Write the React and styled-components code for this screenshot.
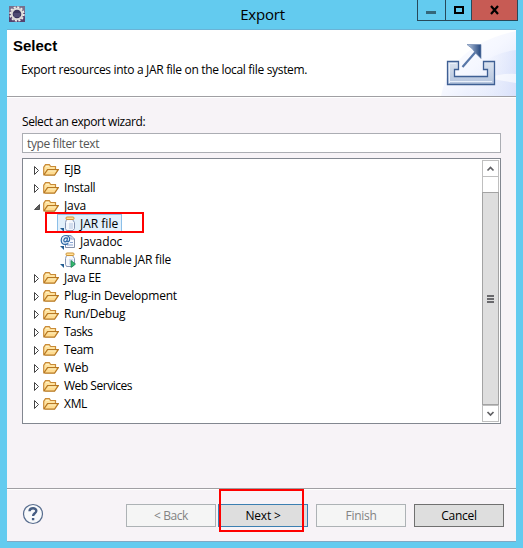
import React from 'react';
import styled, { createGlobalStyle, css } from 'styled-components';

const GlobalStyle = createGlobalStyle`
  * { box-sizing: border-box; }
  body { margin: 0; overflow: hidden; }
`;

const Window = styled.div`
  width: 523px;
  height: 548px;
  padding: 0 7px 6px;
  background: #63cbef;
  color: #000;
  font: 12px/18px 'Open Sans', 'Noto Sans', sans-serif;
  display: flex;
  flex-direction: column;
  cursor: default;
`;

const TitleBar = styled.header`
  position: relative;
  height: 29px;
  flex: none;
  display: flex;
  justify-content: space-between;
  padding-left: 2px;
`;

const AppIcon = styled.svg`
  width: 16px;
  height: 16px;
  margin-top: 6px;
`;

const WindowTitle = styled.h1`
  position: absolute;
  left: 0;
  right: 0;
  top: 4px;
  margin: 0;
  padding-left: 2px;
  text-align: center;
  font-size: 15px;
  line-height: 21px;
  font-weight: 400;
  letter-spacing: -0.2px;
`;

const Controls = styled.div`
  position: relative;
  display: flex;
  height: 21px;
  margin-right: -2px;
  border: solid #27495a;
  border-width: 0 1px 1px;
`;

const Control = styled.button`
  width: ${(p) => p.$width}px;
  padding: 0;
  border: 0;
  border-left: ${(p) => (p.$first ? 0 : '1px solid #27495a')};
  background: ${(p) => (p.$close ? '#c75b54' : 'transparent')};
  display: flex;
`;

const Client = styled.main`
  flex: 1;
  display: flex;
  flex-direction: column;
  background: #f7f3f7;
  border-top: 1px solid #6ab3d6;
  border-bottom: 1px solid #7fa9c4;
`;

const Banner = styled.section`
  height: 67px;
  flex: none;
  display: flex;
  justify-content: space-between;
  background: #fff;
  border-bottom: 1px solid #a09fa3;
  box-shadow: 0 1px #fff;
`;

const BannerText = styled.div`
  padding: 7px 0 0 6px;
`;

const Heading = styled.h2`
  margin: 0;
  font: bold 15px/18px 'Liberation Sans', sans-serif;
`;

const Description = styled.p`
  margin: 6px 0 0 8px;
  letter-spacing: -0.32px;
`;

const Body = styled.section`
  flex: 1;
  padding: 16px 15px 0;
`;

const Label = styled.label`
  display: block;
  height: 20px;
  letter-spacing: -0.42px;
`;

const Filter = styled.input`
  display: block;
  width: 479px;
  height: 20px;
  padding: 0 4px;
  border: 1px solid #abadb3;
  border-radius: 0;
  outline: 0;
  background: #fff;
  font: inherit;
  letter-spacing: -0.38px;
  &::placeholder { color: #555; opacity: 1; }
`;

const TreePanel = styled.div`
  display: flex;
  justify-content: space-between;
  width: 479px;
  height: 266px;
  margin-top: 5px;
  padding: 1px;
  border: 1px solid #828790;
  background: #fff;
`;

const Tree = styled.ul`
  margin: 0;
  padding: 1px 0 0;
  list-style: none;
`;

const Row = styled.li`
  position: relative;
  display: flex;
  align-items: center;
  height: 18px;
  padding-left: ${(p) => (p.$child ? 34 : 9)}px;
`;

const Arrow = styled.svg`
  width: 8px;
  height: 12px;
  margin-right: 2px;
`;

const RowIcon = styled.svg`
  width: 16px;
  height: 16px;
  flex: none;
`;

const Name = styled.span`
  height: 18px;
  line-height: 18px;
  margin-left: ${(p) => (p.$child ? 4 : 5)}px;
  white-space: nowrap;
  letter-spacing: ${(p) => p.$spacing}px;
`;

const Item = styled.div`
  display: flex;
  align-items: center;
  height: 18px;
  padding-left: ${(p) => (p.$child ? 2 : 0)}px;
  border: 1px solid transparent;
  margin-left: -1px;
  ${(p) => p.$selected && css`
    width: 65px;
    margin-top: -2px;
    padding-top: 1px;
    background: #e2f0fb;
    border-color: #8cbfe8;
  `}
`;

const Marker = styled.div`
  position: absolute;
  pointer-events: none;
  border: 2px solid #f00;
  left: ${(p) => p.$x}px;
  top: ${(p) => p.$y}px;
  width: ${(p) => p.$w}px;
  height: ${(p) => p.$h}px;
`;

const ScrollBar = styled.div`
  width: 17px;
  display: flex;
  flex-direction: column;
  border: 1px solid #bfbfbf;
`;

const ScrollButton = styled.svg`
  width: 15px;
  height: 16px;
  flex: none;
  border: solid #bfbfbf;
  border-width: ${(p) => (p.$down ? '1px 0 0' : '0 0 1px')};
`;

const Track = styled.div`
  flex: 1;
  padding-top: 15px;
  display: flex;
`;

const Thumb = styled.div`
  flex: 1;
  margin: 0 -1px;
  border: 1px solid #a3a3a3;
  background: #dedede;
  display: flex;
  flex-direction: column;
  align-items: center;
  justify-content: center;
  gap: 1px;
`;

const Grip = styled.i`
  width: 7px;
  height: 2px;
  background: #69696c;
`;

const Footer = styled.footer`
  height: 53px;
  flex: none;
  display: flex;
  align-items: center;
  padding: 1px 12px 0 15px;
  border-top: 1px solid #a09fa3;
  box-shadow: inset 0 1px #fff;
`;

const HelpIcon = styled.svg`
  width: 22px;
  height: 22px;
  margin: -3px auto 0 0;
`;

const ButtonSlot = styled.div`
  position: relative;
  margin-left: ${(p) => p.$gap}px;
`;

const Button = styled.button`
  display: block;
  width: 90px;
  height: 23px;
  padding: 0;
  border: 1px solid ${(p) => (p.$primary ? '#3c7fb1' : '#707070')};
  background: #dedede;
  color: #000;
  font: inherit;
  line-height: 20px;
  letter-spacing: ${(p) => p.$spacing || 0}px;
  &:disabled {
    border-color: #adb2b5;
    background: #f5f5f5;
    color: #838383;
  }
`;

function Folder() {
  return (
    <RowIcon viewBox="0 0 16 16">
      <path d="M.7 12.5V5.3l1.8-2.6h3.8l1.4 1.8h4.8v3.2" fill="#ffe3a0" stroke="#c98b38" strokeWidth="1.2" />
      <path d="M.9 12.8l3.6-5.1h10.8l-3.7 5.5H2.5z" fill="#ffdc91" stroke="#b77822" strokeWidth="1.2" />
      <path d="M5.2 8.9h8M2.8 4.5h3" stroke="#fff3c5" />
    </RowIcon>
  );
}

function Jar({ runnable }) {
  return (
    <RowIcon viewBox="0 0 16 16">
      <path d="M6.5 3.5h6l2 3v6l-1.5 2H6.5l-1-2v-6z" fill="#f3f6fc" stroke="#8796b5" />
      <path d="M7 7h6v6H7z" fill="#d3deef" />
      <path d="M8 5v8" stroke="#fff" strokeWidth="1.5" />
      <rect x="6" y="1" width="8" height="2.5" rx="1" fill="#ffe09a" stroke="#cf9538" />
      <path d="M0 12h4v4z" fill="#245c91" />
      {runnable && <path d="M11 8.5v7l4.5-3.5z" fill="#35b86d" stroke="#178350" strokeWidth=".7" />}
    </RowIcon>
  );
}

function Doc() {
  return (
    <RowIcon viewBox="0 0 16 16">
      <path d="M5.5 1.5h5.5l3.5 3.5v8.5h-9z" fill="#f8faff" stroke="#8792ab" />
      <path d="M11 1.5V5h3.5M10 8.5h3M7 11h6" fill="none" stroke="#8aa5d2" />
      <circle cx="5.5" cy="5.8" r="4.8" fill="#e4eef9" />
      <path d="M7.5 3.5L7 7.3q.4.7 1.3.4Q9.8 6.8 9.7 5C9.4 2.7 7.8 1.4 5.6 1.5 3 1.5 1.2 3.6 1.2 6.2c0 2.8 2 4.2 4.1 4.2 1.2 0 2.2-.3 3-.8M7.2 5.1C7 3.2 4.5 3.5 3.9 5.8c-.6 2.6 2.2 2.7 3.1.7" fill="none" stroke="#2865a3" strokeWidth="1.15" />
      <path d="M0 12h4v4z" fill="#245c91" />
    </RowIcon>
  );
}

function Expander({ open }) {
  return (
    <Arrow viewBox="0 0 8 12">
      {open
        ? <path d="M6.5 4.5v5h-5z" fill="#606060" stroke="#333" strokeWidth=".8" />
        : <path d="M1.5 2.5v8l4-4z" fill="#fff" stroke="#444" />}
    </Arrow>
  );
}

function GearIcon() {
  return (
    <AppIcon viewBox="0 0 16 16">
      <path d="M0 0h16v16H0z" fill="#554370" />
      <path d="M0 0h16v5H0z" fill="#77708c" />
      <circle cx="8" cy="8" r="6.8" fill="none" stroke="#f1efeb" strokeWidth="1.8" strokeDasharray="2.1 1.46" />
      <circle cx="8" cy="8" r="5.3" fill="#39345b" stroke="#dedcda" strokeWidth="2" />
      <path d="M4.5 8h7M5 10h6" stroke="#66608b" />
    </AppIcon>
  );
}

function BannerArt() {
  return (
    <svg width="75" height="66" viewBox="0 0 75 66">
      <defs>
        <linearGradient id="sky" x1="0" y1="0" x2="1" y2="1">
          <stop offset="0" stopColor="#fff" />
          <stop offset=".5" stopColor="#f5f7ff" />
          <stop offset="1" stopColor="#dce3fa" />
        </linearGradient>
        <linearGradient id="haze">
          <stop offset="0" stopColor="#fff" stopOpacity="0" />
          <stop offset="1" stopColor="#d7e0fb" />
        </linearGradient>
        <linearGradient id="steel" x1="0" y1="0" x2="0" y2="1">
          <stop offset="0" stopColor="#dbe3ef" />
          <stop offset="1" stopColor="#b3c3dd" />
        </linearGradient>
        <linearGradient id="tip">
          <stop offset="0" stopColor="#b9c9e0" />
          <stop offset="1" stopColor="#24477e" />
        </linearGradient>
      </defs>
      <path d="M0 66Q10 15 75 1v65z" fill="url(#sky)" />
      <path d="M26 66Q31 25 75 20v46z" fill="url(#haze)" opacity=".7" />
      <path d="M45 48Q62 43 75 44v9z" fill="#fff" opacity=".6" />
      <path d="M6.5 31.5h11v8h-4v7h33v-7h-4v-8h11v23h-47z" fill="url(#steel)" stroke="#3e5f94" strokeWidth="1.3" />
      <path d="M8.5 53V33.5H15M9 51.5h42" fill="none" stroke="#e9f0fa" />
      <path d="M21.5 37L35 21.5" stroke="#5877a8" strokeWidth="2.2" />
      <path d="M26 14.5h14v14l-5-5-4-5z" fill="url(#tip)" stroke="#7189b2" strokeWidth=".7" />
    </svg>
  );
}

const nodes = [
  { name: 'EJB', spacing: -0.3 },
  { name: 'Install', spacing: -0.3 },
  { name: 'Java', open: true, spacing: -0.1 },
  { name: 'JAR file', icon: <Jar />, selected: true, spacing: 0 },
  { name: 'Javadoc', icon: <Doc />, spacing: -0.1 },
  { name: 'Runnable JAR file', icon: <Jar runnable />, spacing: -0.2 },
  { name: 'Java EE', spacing: -0.3 },
  { name: 'Plug-in Development', spacing: -0.2 },
  { name: 'Run/Debug', spacing: -0.2 },
  { name: 'Tasks', spacing: -0.5 },
  { name: 'Team', spacing: -0.4 },
  { name: 'Web', spacing: -0.3 },
  { name: 'Web Services', spacing: -0.48 },
  { name: 'XML', spacing: -0.3 },
];

function TreeNode({ name, icon, open, selected, spacing }) {
  const child = Boolean(icon);
  return (
    <Row $child={child}>
      {!child && <Expander open={open} />}
      <Item $child={child} $selected={selected}>
        {icon || <Folder />}
        <Name $child={child} $spacing={spacing}>{name}</Name>
      </Item>
      {selected && <Marker $x={21} $y={-3} $w={99} $h={21} />}
    </Row>
  );
}

export default function App() {
  return (
    <Window>
      <GlobalStyle />
      <TitleBar>
        <GearIcon />
        <WindowTitle>Export</WindowTitle>
        <Controls>
          <Control $width={27} $first aria-label="Minimize">
            <svg width="27" height="20"><path d="M8 11h10v3H8z" fill="#34677a" /></svg>
          </Control>
          <Control $width={26} aria-label="Maximize">
            <svg width="25" height="20"><path d="M9 7h8v6H9z" fill="none" stroke="#000" strokeWidth="2" /></svg>
          </Control>
          <Control $width={46} $close aria-label="Close">
            <svg width="45" height="20"><path d="M19 6l7 8m0-8l-7 8" stroke="#000" strokeWidth="2.2" /></svg>
          </Control>
        </Controls>
      </TitleBar>
      <Client>
        <Banner>
          <BannerText>
            <Heading>Select</Heading>
            <Description>Export resources into a JAR file on the local file system.</Description>
          </BannerText>
          <BannerArt />
        </Banner>
        <Body>
          <Label htmlFor="filter">Select an export wizard:</Label>
          <Filter id="filter" placeholder="type filter text" />
          <TreePanel>
            <Tree>
              {nodes.map((n) => <TreeNode key={n.name} {...n} />)}
            </Tree>
            <ScrollBar>
              <ScrollButton viewBox="0 0 15 15"><path d="M4.5 9.5l3-3 3 3" fill="none" stroke="#606064" strokeWidth="1.7" /></ScrollButton>
              <Track><Thumb><Grip /><Grip /><Grip /></Thumb></Track>
              <ScrollButton $down viewBox="0 0 15 15"><path d="M4.5 6l3 3 3-3" fill="none" stroke="#606064" strokeWidth="1.7" /></ScrollButton>
            </ScrollBar>
          </TreePanel>
        </Body>
        <Footer>
          <HelpIcon viewBox="0 0 22 22">
            <circle cx="11" cy="11" r="9.5" fill="#f8f9fb" stroke="#566b8d" strokeWidth="1.2" />
            <path d="M7.5 8.2C7.7 4.3 14.5 4.4 14.3 8c-.1 2.3-3.2 2.3-3.2 5M11.1 15v2.3" fill="none" stroke="#465d83" strokeWidth="2.4" />
          </HelpIcon>
          <ButtonSlot><Button disabled $spacing={-0.4}>&lt; Back</Button></ButtonSlot>
          <ButtonSlot $gap={2}>
            <Button $primary $spacing={-0.2}>Next &gt;</Button>
            <Marker $x={1} $y={-15} $w={85} $h={43} />
          </ButtonSlot>
          <ButtonSlot $gap={8}><Button disabled $spacing={-0.3}>Finish</Button></ButtonSlot>
          <ButtonSlot $gap={8}><Button $spacing={-0.3}>Cancel</Button></ButtonSlot>
        </Footer>
      </Client>
    </Window>
  );
}
